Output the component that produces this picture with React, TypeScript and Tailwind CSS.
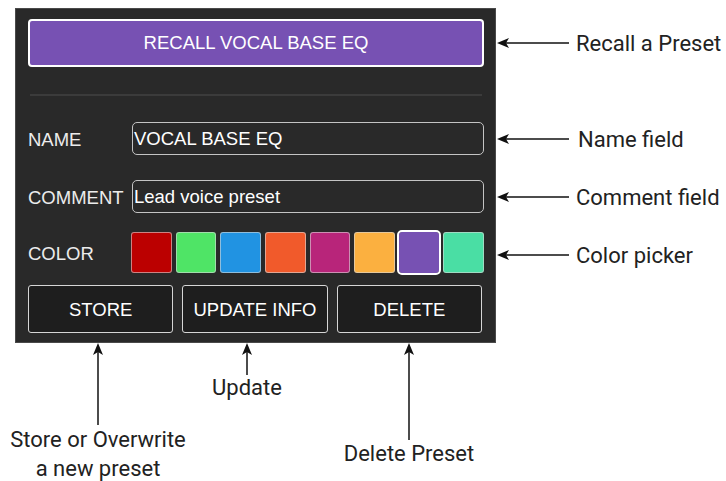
const swatches = [
  "#bb0000",
  "#4fe466",
  "#2193e2",
  "#f15a2b",
  "#b8257a",
  "#fbb040",
  "#7751b3",
  "#4adea4",
];

const LeftArrow = () => (
  <svg width="72" height="12" viewBox="0 0 72 12" className="shrink-0">
    <line x1="8" y1="6" x2="72" y2="6" stroke="#111" strokeWidth="1.5" />
    <path d="M0 6 L12 1 L9 6 L12 11 Z" fill="#111" />
  </svg>
);

const UpArrow = ({ h }: { h: number }) => (
  <svg width="12" height={h} viewBox={`0 0 12 ${h}`} className="shrink-0">
    <line x1="6" y1="8" x2="6" y2={h} stroke="#111" strokeWidth="1.5" />
    <path d="M6 0 L11 12 L6 9 L1 12 Z" fill="#111" />
  </svg>
);

const Note = ({ text, className = "" }: { text: string; className?: string }) => (
  <div className={`flex items-center h-[26px] ${className}`}>
    <LeftArrow />
    <span className="ml-[7px] text-[22px] text-[#222] whitespace-nowrap">{text}</span>
  </div>
);

const Field = ({ label, value }: { label: string; value: string }) => (
  <div className="flex items-center">
    <div className="w-[104px] pt-[3px] text-[18.5px] text-[#ececec]">{label}</div>
    <div className="flex-1 h-[33px] flex items-center px-[1px] rounded-[5px] border-[1.5px] border-[#c4c4c4] text-[18.5px] text-white">
      {value}
    </div>
  </div>
);

export default function App() {
  return (
    <div
      className="w-[726px] h-[481px] bg-white overflow-hidden pt-[8px] pl-[15px]"
      style={{ fontFamily: "Roboto, 'Noto Sans', sans-serif" }}
    >
      <div className="flex">
        {/* Preset panel */}
        <div
          className="w-[481px] h-[335px] bg-[#292929] border border-[#4a4a4a] pt-[10px] pl-[12px] pr-[11px] flex flex-col"
          style={{ fontFamily: "'Liberation Sans', Arial, sans-serif" }}
        >
          <button className="h-[48px] rounded-[4px] border-2 border-white bg-[#7751b3] text-[18.5px] text-white">
            RECALL VOCAL BASE EQ
          </button>

          <div className="mt-[27px] h-[2px] mx-[2px] bg-[#3b3b3b]" />

          <div className="mt-[26px]">
            <Field label="NAME" value="VOCAL BASE EQ" />
          </div>
          <div className="mt-[25px]">
            <Field label="COMMENT" value="Lead voice preset" />
          </div>

          <div className="mt-[19px] flex items-center">
            <div className="w-[103px] pt-[3px] text-[18.5px] text-[#ececec]">COLOR</div>
            <div className="flex-1 grid grid-cols-8 gap-[4px]">
              {swatches.map((c, i) => (
                <div
                  key={c}
                  className={
                    i === 6
                      ? "h-[41px] rounded-[3px] outline-2 outline-white"
                      : "h-[41px] rounded-[3px] border border-[#d8d8d8]/60"
                  }
                  style={{ backgroundColor: c }}
                />
              ))}
            </div>
          </div>

          <div className="mt-[12px] grid grid-cols-3 gap-[9px] pr-[2px]">
            {["STORE", "UPDATE INFO", "DELETE"].map((t) => (
              <button
                key={t}
                className="h-[48px] pt-[2px] rounded-[3px] border-[1.5px] border-[#d6d6d6] bg-[#1e1e1e] text-[18.5px] text-white"
              >
                {t}
              </button>
            ))}
          </div>
        </div>

        {/* Right side notes */}
        <div className="ml-[1px] flex flex-col">
          <Note text="Recall a Preset" className="mt-[22px]" />
          <Note text="Name field" className="mt-[70px] [&>span]:ml-[9px]" />
          <Note text="Comment field" className="mt-[32px]" />
          <Note text="Color picker" className="mt-[32px]" />
        </div>
      </div>

      {/* Bottom notes */}
      <div className="flex -ml-[15px] text-[22px] text-[#222]">
        <div className="w-[196px] flex flex-col items-center">
          <UpArrow h={82} />
          <div className="leading-[29px] text-center whitespace-nowrap">
            Store or Overwrite
            <br />a new preset
          </div>
        </div>
        <div className="ml-[1px] w-[100px] flex flex-col items-center">
          <UpArrow h={32} />
          <div className="leading-[26px]">Update</div>
        </div>
        <div className="ml-[32px] w-[160px] flex flex-col items-center">
          <UpArrow h={97} />
          <div className="leading-[28px] whitespace-nowrap">Delete Preset</div>
        </div>
      </div>
    </div>
  );
}
